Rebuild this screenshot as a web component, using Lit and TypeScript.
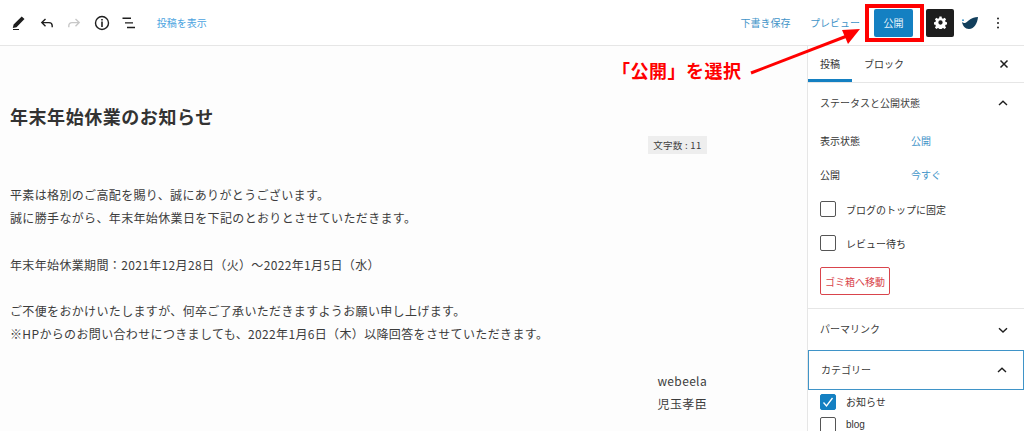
import { LitElement, html, css, svg } from "lit";
import { customElement } from "lit/decorators.js";

const chevron = (up: boolean) => html`<svg class="chev" width="14" height="14" viewBox="0 0 14 14">
  <path d=${up ? "M3 9 7 5.200l4 3.800" : "M3 5.200 7 9l4-3.800"} fill="none" stroke="#1e1e1e" stroke-width="1.400"/>
</svg>`;

@customElement("app-root")
export class AppRoot extends LitElement {
  static styles = css`
    :host {
      display: block;
      position: relative;
      width: 1024px;
      height: 431px;
      overflow: hidden;
      background: #fff;
      color: #333;
      font-family: "Noto Sans CJK JP", "Noto Sans", sans-serif;
      font-size: 10px;
    }
    svg { display: block; }

    .top {
      height: 46px;
      box-sizing: border-box;
      border-bottom: 1px solid #e6e6e6;
      display: flex;
      align-items: center;
      padding: 0 24px 0 10px;
    }
    .tools { display: flex; align-items: center; gap: 9.700px; }
    .view { margin-left: 18px; color: #4ba3e0; }
    .spacer { flex: 1; }
    .save { color: #3f94c8; margin-right: 19.500px; }
    .preview { color: #3f94c8; margin-right: 14px; }
    .publish {
      width: 39px;
      height: 28px;
      background: #1480c2;
      color: #e8f3fa;
      border-radius: 2px;
      display: flex;
      align-items: center;
      justify-content: center;
      margin-right: 13px;
    }
    .gear {
      width: 28px;
      height: 28px;
      background: #1e1e1e;
      border-radius: 2px;
      display: flex;
      align-items: center;
      justify-content: center;
      margin-right: 7px;
    }
    .logo { margin-right: 17px; }

    .main { display: flex; height: 385px; }
    .editor {
      flex: 1;
      background: #fdfdfd;
      padding: 0 100px 0 10px;
      font-size: 12px;
      line-height: 23.200px;
      letter-spacing: 0.350px;
      color: #3c3c3c;
    }
    .title {
      margin: 0;
      padding-top: 57px;
      font-size: 18px;
      line-height: 26px;
      font-weight: 700;
      letter-spacing: 0.550px;
      color: #333;
    }
    .count-row { display: flex; justify-content: flex-end; margin-top: 7px; }
    .count {
      background: #eee;
      font-size: 9.500px;
      line-height: 18px;
      padding: 0 5.500px;
      letter-spacing: 0.300px;
    }
    .body { margin-top: 29px; }
    .body p { margin: 0 0 23.200px; }
    .sign { text-align: right; }

    .side {
      width: 217px;
      flex: none;
      box-sizing: border-box;
      border-left: 1px solid #e6e6e6;
      background: #fff;
    }
    .tabs {
      height: 37px;
      box-sizing: border-box;
      border-bottom: 1px solid #e6e6e6;
      display: flex;
      align-items: center;
      font-size: 10px;
      color: #333;
    }
    .tab { height: 36px; line-height: 36px; box-sizing: border-box; }
    .tab.on { width: 44px; text-align: center; border-bottom: 3px solid #1480c2; }
    .tab.off { margin-left: 12px; }
    .close { margin-left: auto; margin-right: 14px; }
    .panel-head {
      display: flex;
      align-items: center;
      justify-content: space-between;
      padding: 0 14px 0 12px;
      font-size: 10px;
      color: #3c3c3c;
    }
    .panel-head span { margin-bottom: 2px; }
    .status { border-bottom: 1px solid #e6e6e6; height: 226px; box-sizing: border-box; }
    .status .panel-head { height: 40px; }
    .row { display: flex; align-items: center; padding-left: 12px; height: 34px; }
    .row .k { width: 91px; }
    .row a { color: #3f94c8; }
    .check { display: flex; align-items: center; gap: 10px; padding-left: 12px; height: 34px; }
    .row + .check { margin-top: 1px; }
    .box {
      width: 16px;
      height: 16px;
      box-sizing: border-box;
      border: 1px solid #555;
      border-radius: 2px;
      background: #fff;
      flex: none;
    }
    .box.on {
      background: #1480c2;
      border-color: #1480c2;
      display: flex;
      align-items: center;
      justify-content: center;
    }
    .trash {
      margin: 7px 0 0 12px;
      width: 70px;
      height: 28px;
      box-sizing: border-box;
      border: 1px solid #d9444c;
      border-radius: 2px;
      color: #d9444c;
      display: flex;
      align-items: center;
      justify-content: center;
    }
    .perma { height: 41px; }
    .cat {
      height: 40px;
      box-sizing: border-box;
      border: 1px solid #3f94c8;
      padding: 0 14px 0 12px;
    }
    .cat-list .check { height: 23px; }
    .latin { font-family: "Liberation Sans", sans-serif; }

    .red-box {
      position: absolute;
      left: 865px;
      top: 4px;
      width: 59px;
      height: 38px;
      box-sizing: border-box;
      border: 4px solid #f00;
    }
    .note {
      position: absolute;
      left: 612px;
      top: 58px;
      font-size: 18px;
      line-height: 24px;
      letter-spacing: 0.500px;
      font-weight: 700;
      color: #f00;
      white-space: nowrap;
    }
    .arrow { position: absolute; left: 745px; top: 20px; }
  `;

  render() {
    return html`
      <div class="top">
        <div class="tools">
          <svg width="18" height="18" viewBox="0 0 18 18"><path d="M3.600 11.600 11.700 3.500l2.800 2.600-8 8.100-3.700.8zM3 15.900h6v1.100H3z" transform="translate(0 -1)" fill="#1e1e1e"/></svg>
          <svg width="18" height="18" viewBox="0 0 18 18"><path d="M7.500 5 3.800 8.600l3.700 3.600M4 8.600h7c2 0 3.200 1.300 3.200 3.100v1.500" fill="none" stroke="#1e1e1e" stroke-width="1.400"/></svg>
          <svg width="18" height="18" viewBox="0 0 18 18"><path d="M10.500 5l3.700 3.600-3.700 3.600M14 8.600H7c-2 0-3.200 1.300-3.200 3.100v1.500" fill="none" stroke="#c8c8c8" stroke-width="1.400"/></svg>
          <svg width="18" height="18" viewBox="0 0 18 18"><circle cx="9" cy="9" r="6.500" fill="none" stroke="#1e1e1e" stroke-width="1.400"/><path d="M8.200 4.900h1.600v1.600H8.200zM8.200 7.600h1.600v5.400H8.200z" fill="#1e1e1e"/></svg>
          <svg width="18" height="18" viewBox="0 0 18 18"><path d="M1.500 3.600h8.500v1.400H1.500zM4 8.200h8v1.400H4zM6 12.800h8v1.400H6z" fill="#1e1e1e"/></svg>
        </div>
        <span class="view">投稿を表示</span>
        <span class="spacer"></span>
        <span class="save">下書き保存</span>
        <span class="preview">プレビュー</span>
        <div class="publish">公開</div>
        <div class="gear">
          <svg width="13" height="13" viewBox="0 0 24 24"><path fill="#fff" fill-rule="evenodd" d="M10 1h4l.6 3.200 2.200.9 2.700-1.800 2.800 2.800-1.800 2.700.9 2.200 3.200.6v4l-3.200.6-.9 2.200 1.800 2.700-2.800 2.800-2.700-1.800-2.200.9-.6 3.200h-4l-.6-3.200-2.200-.9-2.700 1.800-2.800-2.800 1.800-2.700-.9-2.200-3.200-.6v-4l3.200-.6.9-2.200-1.800-2.700 2.800-2.800 2.700 1.800 2.200-.9zM12 8a4 4 0 1 0 0 8 4 4 0 0 0 0-8z"/></svg>
        </div>
        <svg class="logo" width="18" height="14" viewBox="0 0 18 14"><path d="M1 6c1.200 1.300 2.600 1.400 4 .6C7.500 5 10 1.200 17 1c-.6 6-3.600 12-9 12C4 13 1.800 10 1 6z" fill="#123f5c"/><circle cx="2" cy="4.200" r=".9" fill="#2d8ac0"/></svg>
        <svg width="4" height="14" viewBox="0 0 4 14"><circle cx="2" cy="2.500" r="1" fill="#1e1e1e"/><circle cx="2" cy="7" r="1" fill="#1e1e1e"/><circle cx="2" cy="11.500" r="1" fill="#1e1e1e"/></svg>
      </div>

      <div class="main">
        <div class="editor">
          <h1 class="title">年末年始休業のお知らせ</h1>
          <div class="count-row"><span class="count">文字数 : 11</span></div>
          <div class="body">
            <p>平素は格別のご高配を賜り、誠にありがとうございます。<br />誠に勝手ながら、年末年始休業日を下記のとおりとさせていただきます。</p>
            <p>年末年始休業期間：2021年12月28日（火）〜2022年1月5日（水）</p>
            <p>ご不便をおかけいたしますが、何卒ご了承いただきますようお願い申し上げます。<br />※HPからのお問い合わせにつきましても、2022年1月6日（木）以降回答をさせていただきます。</p>
            <div class="sign">webeela<br />児玉孝臣</div>
          </div>
        </div>

        <div class="side">
          <div class="tabs">
            <div class="tab on">投稿</div>
            <div class="tab off">ブロック</div>
            <svg class="close" width="12" height="12" viewBox="0 0 12 12"><path d="M2.500 2.500l7 7M9.500 2.500l-7 7" stroke="#1e1e1e" stroke-width="1.500"/></svg>
          </div>
          <div class="status">
            <div class="panel-head"><span>ステータスと公開状態</span>${chevron(true)}</div>
            <div class="row"><span class="k">表示状態</span><a>公開</a></div>
            <div class="row"><span class="k">公開</span><a>今すぐ</a></div>
            <div class="check"><span class="box"></span>ブログのトップに固定</div>
            <div class="check"><span class="box"></span>レビュー待ち</div>
            <div class="trash">ゴミ箱へ移動</div>
          </div>
          <div class="panel-head perma"><span>パーマリンク</span>${chevron(false)}</div>
          <div class="panel-head cat"><span>カテゴリー</span>${chevron(true)}</div>
          <div class="cat-list">
            <div class="check">
              <span class="box on"><svg width="14" height="14" viewBox="0 0 14 14"><path d="M2.500 7.500 5.500 11l6-8" fill="none" stroke="#fff" stroke-width="1.300"/></svg></span>お知らせ
            </div>
            <div class="check"><span class="box"></span><span class="latin">blog</span></div>
          </div>
        </div>
      </div>

      <div class="red-box"></div>
      <div class="note">「公開」を選択</div>
      <svg class="arrow" width="125" height="60" viewBox="0 0 125 60">
        ${svg`<path d="M6 53 102 16" stroke="#f00" stroke-width="3" fill="none"/><path d="M115 9 97 10l6 14z" fill="#f00"/>`}
      </svg>
    `;
  }
}
